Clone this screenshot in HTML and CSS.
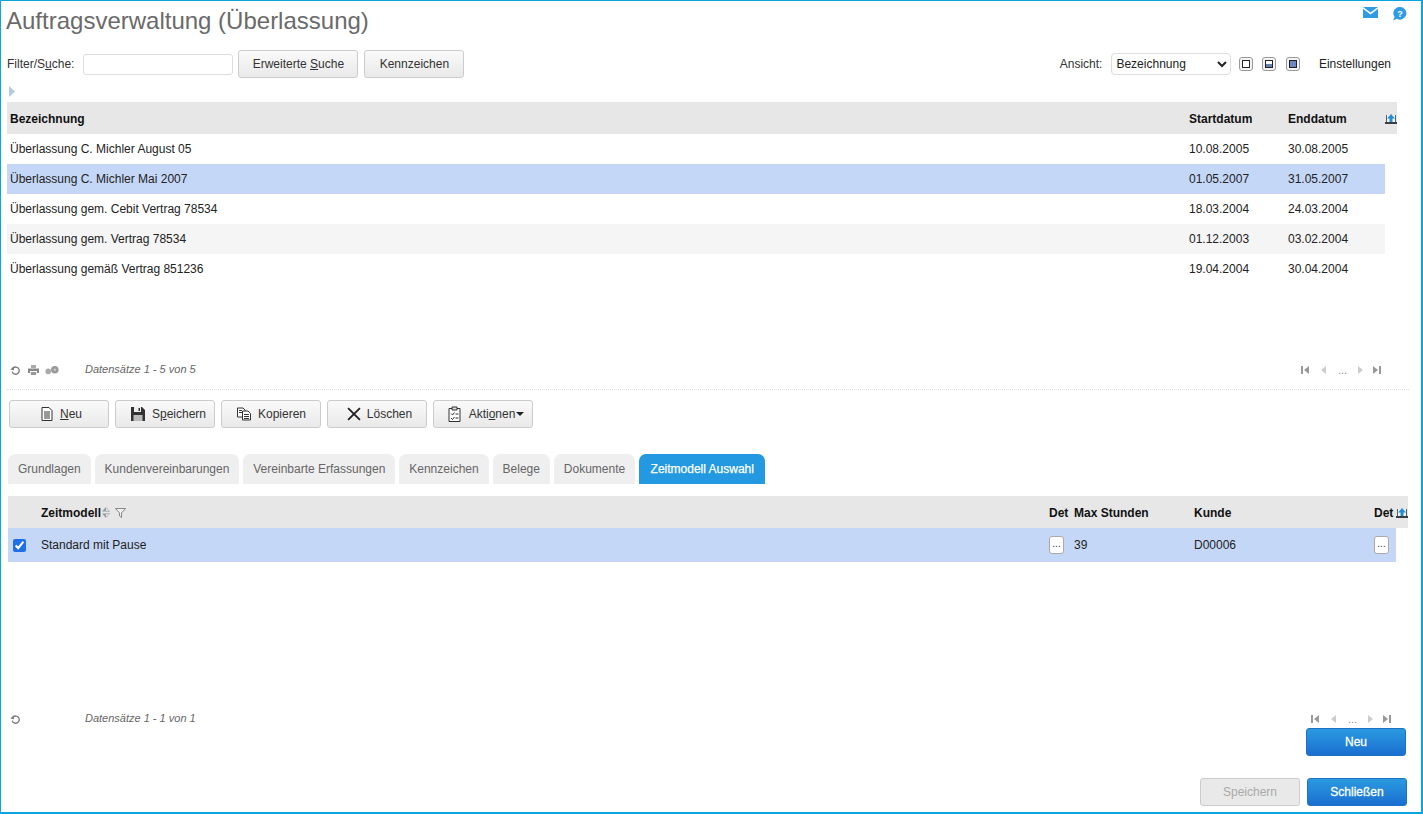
FILE: index.html
```html
<!DOCTYPE html>
<html lang="de">
<head>
<meta charset="utf-8">
<title>Auftragsverwaltung (Überlassung)</title>
<link rel="stylesheet" href="styles.css">
</head>
<body>
<svg class="defs" width="0" height="0" aria-hidden="true">
  <defs>
    <symbol id="export" viewBox="0 0 12 10">
      <rect x="1" y="1" width="10" height="7" fill="#f2f4f6"/>
      <path d="M1 1H2V8H10V1H11V9H1Z" fill="#5a6068"/>
      <rect x="0" y="8" width="12" height="2" fill="#3a3f46"/>
      <path d="M6 0 10 4.500H7.500V8H4.500V4.500H2Z" fill="#1e8fd8"/>
    </symbol>
    <symbol id="refresh" viewBox="0 0 11 11">
      <path d="M3 3.200A3.600 3.600 0 1 1 2.200 6.600" fill="none" stroke="#777" stroke-width="1.300"/>
      <path d="M0.400 4.600 4 5.200 3.600 1.600Z" fill="#777"/>
    </symbol>
  </defs>
</svg>
<main class="app">
  <header class="title-row">
    <h1 class="title">Auftragsverwaltung (Überlassung)</h1>
    <div class="top-icons">
      <svg class="icon-mail" viewBox="0 0 15 11"><path d="M0 0H15L7.500 5.600Z" fill="#2f9be4"/><path d="M0 1.800 7.500 7.400 15 1.800V11H0Z" fill="#2f9be4"/></svg>
      <svg class="icon-help" viewBox="0 0 15 14"><path d="M8 0A6.300 6.300 0 1 1 5 11.800L1 13.600 2.600 10A6.300 6.300 0 0 1 8 0Z" fill="#2f9be4"/><text x="8" y="9.600" class="help-q">?</text></svg>
    </div>
  </header>

  <section class="toolbar">
    <label class="lbl">Filter/S<u>u</u>che:</label>
    <input class="search" type="text" aria-label="Filter">
    <button class="btn btn-search">Erweiterte <u>S</u>uche</button>
    <button class="btn btn-flag">Kennzeichen</button>
    <div class="view">
      <label class="lbl">Ansicht:</label>
      <select class="view-select"><option>Bezeichnung</option></select>
      <span class="layout-btn"><span class="layout-in"></span></span>
      <span class="layout-btn"><span class="layout-in half"></span></span>
      <span class="layout-btn"><span class="layout-in full"></span></span>
      <span class="settings">Einstellungen</span>
    </div>
  </section>

  <div class="expander"><svg width="6" height="11" viewBox="0 0 6 11"><path d="M0 0 6 5.500 0 11Z" fill="#b4cbdc"/></svg></div>

  <section class="table-a">
    <div class="a-row a-head">
      <span>Bezeichnung</span><span>Startdatum</span><span>Enddatum</span>
      <svg class="export"><use href="#export"/></svg>
    </div>
    <div class="a-row"><span>Überlassung C. Michler August 05</span><span>10.08.2005</span><span>30.08.2005</span></div>
    <div class="a-row sel"><span>Überlassung C. Michler Mai 2007</span><span>01.05.2007</span><span>31.05.2007</span></div>
    <div class="a-row"><span>Überlassung gem. Cebit Vertrag 78534</span><span>18.03.2004</span><span>24.03.2004</span></div>
    <div class="a-row alt"><span>Überlassung gem. Vertrag 78534</span><span>01.12.2003</span><span>03.02.2004</span></div>
    <div class="a-row"><span>Überlassung gemäß Vertrag 851236</span><span>19.04.2004</span><span>30.04.2004</span></div>
  </section>

  <footer class="list-foot foot-a">
    <svg class="ico-refresh"><use href="#refresh"/></svg>
    <svg class="ico-print" viewBox="0 0 11 10"><path d="M3 0H8V3H3Z" fill="#aaa"/><path d="M0 3.500H11V8H9V6H2V8H0Z" fill="#888"/><path d="M2.800 7H8.200V10H2.800Z" fill="#999"/></svg>
    <svg class="ico-gears" viewBox="0 0 14 9"><circle cx="3.200" cy="5.400" r="2.800" fill="#aaa"/><circle cx="9.800" cy="3.800" r="3.800" fill="#999"/><circle cx="9.800" cy="3.800" r="1.200" fill="#ccc"/></svg>
    <span class="records">Datensätze 1 - 5 von 5</span>
    <nav class="pager">
      <svg class="pg" viewBox="0 0 8 8"><path d="M0 0H2V8H0ZM8 0V8L3 4Z" fill="#999"/></svg>
      <svg class="pg pg-prev" viewBox="0 0 5 8"><path d="M5 0V8L0 4Z" fill="#ccc"/></svg>
      <span class="dots">...</span>
      <svg class="pg pg-next" viewBox="0 0 5 8"><path d="M0 0V8L5 4Z" fill="#ccc"/></svg>
      <svg class="pg pg-last" viewBox="0 0 8 8"><path d="M0 0V8L5 4ZM6 0H8V8H6Z" fill="#999"/></svg>
    </nav>
  </footer>

  <div class="sep"></div>

  <section class="actions">
    <button class="btn act act-new">
      <svg class="act-ico" viewBox="0 0 12 14"><path d="M1 .500H8L11 3.500V13.500H1Z" fill="#fff" stroke="#333"/><path d="M3 5H9M3 7H9M3 9H9M3 11H9" stroke="#333"/></svg>
      <span><u>N</u>eu</span>
    </button>
    <button class="btn act act-save">
      <svg class="act-ico" viewBox="0 0 14 14"><path d="M0 0H11L14 3V14H0Z" fill="#333"/><path d="M3 0H10V5H3Z" fill="#eee"/><path d="M7.500 1H9V4H7.500Z" fill="#333"/><path d="M2.500 8H11.500V14H2.500Z" fill="#bbb"/></svg>
      <span>S<u>p</u>eichern</span>
    </button>
    <button class="btn act act-copy">
      <svg class="act-ico" viewBox="0 0 14 13"><path d="M.500.500H6L8 2.500V9.500H.500Z" fill="#fff" stroke="#333"/><path d="M5.500 3.500H11L13.500 6V12.500H5.500Z" fill="#fff" stroke="#333"/><path d="M2 3H5M2 5H5M7 7H12M7 9H12M7 11H12" stroke="#333"/></svg>
      <span>Kopieren</span>
    </button>
    <button class="btn act act-del">
      <svg class="act-ico" viewBox="0 0 13 13"><path d="M1 1 12 12M12 1 1 12" stroke="#222" stroke-width="1.700"/></svg>
      <span>Löschen</span>
    </button>
    <button class="btn act act-more">
      <svg class="act-ico" viewBox="0 0 14 16"><path d="M1.500 2.500H12.500V15.500H1.500Z" fill="#fff" stroke="#333"/><path d="M4.500 1H9.500V4H4.500Z" fill="#ddd" stroke="#333"/><path d="M3.500 7.500 5 9 7 6.500M3.500 12 5 13.500 7 11" fill="none" stroke="#333"/><path d="M8 8H11M8 12H11" stroke="#333"/></svg>
      <span>Akti<u>o</u>nen<i class="caret"></i></span>
    </button>
  </section>

  <nav class="tabs">
    <span class="tab">Grundlagen</span>
    <span class="tab">Kundenvereinbarungen</span>
    <span class="tab">Vereinbarte Erfassungen</span>
    <span class="tab">Kennzeichen</span>
    <span class="tab">Belege</span>
    <span class="tab">Dokumente</span>
    <span class="tab active">Zeitmodell Auswahl</span>
  </nav>

  <section class="table-b">
    <div class="b-row b-head">
      <span></span>
      <span class="zm">Zeitmodell
        <svg class="sort" viewBox="0 0 8 11"><path d="M4 0V4.500H0ZM4 11V6.500H0Z" fill="#999"/><path d="M4 .500 7.500 4.500H4M4 10.500 7.500 6.500H4" fill="none" stroke="#aaa" stroke-width=".8"/></svg>
        <svg class="filter" viewBox="0 0 11 10"><path d="M.500.500H10.500L6.500 5V9.500L4.500 8V5Z" fill="#fff" fill-opacity=".4" stroke="#888"/></svg>
      </span>
      <span>Det</span><span>Max Stunden</span><span>Kunde</span><span>Det</span>
      <svg class="export"><use href="#export"/></svg>
    </div>
    <div class="b-row b-body">
      <input class="check" type="checkbox" checked aria-label="Auswahl">
      <span>Standard mit Pause</span>
      <button class="dots-btn">...</button>
      <span>39</span>
      <span>D00006</span>
      <button class="dots-btn">...</button>
    </div>
  </section>

  <footer class="list-foot foot-b">
    <svg class="ico-refresh"><use href="#refresh"/></svg>
    <span class="records">Datensätze 1 - 1 von 1</span>
    <nav class="pager">
      <svg class="pg" viewBox="0 0 8 8"><path d="M0 0H2V8H0ZM8 0V8L3 4Z" fill="#999"/></svg>
      <svg class="pg pg-prev" viewBox="0 0 5 8"><path d="M5 0V8L0 4Z" fill="#ccc"/></svg>
      <span class="dots">...</span>
      <svg class="pg pg-next" viewBox="0 0 5 8"><path d="M0 0V8L5 4Z" fill="#ccc"/></svg>
      <svg class="pg pg-last" viewBox="0 0 8 8"><path d="M0 0V8L5 4ZM6 0H8V8H6Z" fill="#999"/></svg>
    </nav>
  </footer>

  <div class="new-row"><button class="btn primary">Neu</button></div>

  <div class="bottom-row">
    <button class="btn disabled">Speichern</button>
    <button class="btn primary">Schließen</button>
  </div>
</main>
</body>
</html>
```
FILE: styles.css
```css
* { box-sizing: border-box; }
html, body { margin: 0; padding: 0; background: #fff; }
body { font: 12px "Liberation Sans", Arial, sans-serif; color: #222; overflow: hidden; }
.defs { position: absolute; }
button { font: inherit; }

.app {
  width: 1423px;
  height: 814px;
  border: 1px solid #0aa5e0;
  border-width: 1px 2px 2px 1px;
  display: flex;
  flex-direction: column;
  overflow: hidden;
}

.title-row { display: flex; height: 49px; padding-left: 5px; }
.title { margin: 7px 0 0; font-size: 24px; font-weight: 400; line-height: 26px; color: #6a6a6a; }
.top-icons { margin-left: auto; display: flex; gap: 14px; padding: 6px 14px 0 0; align-items: flex-start; }
.icon-mail { width: 15px; height: 11px; }
.icon-help { width: 15px; height: 14px; }
.help-q { font: bold 9px "Liberation Sans", sans-serif; fill: #fff; text-anchor: middle; }

.btn {
  height: 28px;
  border: 1px solid #ccc;
  border-radius: 3px;
  background: linear-gradient(#fafafa, #e9e9e9);
  color: #333;
  padding: 0;
  cursor: default;
}
.toolbar { display: flex; align-items: center; height: 28px; padding-left: 6px; }
.lbl { color: #333; }
.search { width: 150px; height: 21px; margin-left: 9px; border: 1px solid #ddd; border-radius: 3px; background: #fff; }
.btn-search { width: 120px; margin-left: 5px; }
.btn-flag { width: 100px; margin-left: 6px; }
.view { margin-left: auto; display: flex; align-items: center; padding-right: 30px; }
.view-select {
  width: 120px; height: 22px; margin-left: 9px; padding: 0;
  border: 1px solid #ddd; border-radius: 4px; background: #fff;
  font: 12px "Liberation Sans", sans-serif; color: #222;
}
.layout-btn {
  width: 14px; height: 14px; margin-left: 8px; padding: 2px;
  border: 1px solid #999; border-radius: 3px; background: #f4f4f4; display: flex;
}
.layout-btn + .layout-btn { margin-left: 9px; }
.layout-btn + .layout-btn + .layout-btn { margin-left: 10px; }
.layout-in { flex: 1; border: 1px solid #222; background: #fff; }
.layout-in.half { background: linear-gradient(#fff 50%, #6a7fae 50%); }
.layout-in.full { background: #6a86c4; }
.settings { margin-left: 18.500px; }

.expander { height: 24px; padding: 8px 0 0 8px; display: flex; align-items: flex-start; }

.table-a { margin-left: 6px; width: 1390px; }
.a-row {
  display: grid;
  align-items: center;
  height: 30px;
  width: 1378px;
  padding-left: 3px;
  grid-template-columns: 1179px 99px 97px;
}
.a-row.a-head { width: 1390px; height: 32px; padding-top: 1px; background: #e7e7e7; font-weight: 700; color: #111; grid-template-columns: 1179px 99px 97px 11px; }
.a-row.sel { background: #c5d7f7; }
.a-row.alt { background: #f5f5f5; }
.export { width: 12px; height: 10px; display: block; }

.list-foot { display: flex; align-items: center; height: 16px; font-size: 11px; }
.foot-a { margin-top: 78px; padding-left: 9px; }
.foot-b { margin-top: 149px; padding-left: 9px; }
.ico-refresh { width: 11px; height: 11px; }
.ico-print { width: 11px; height: 10px; margin-left: 7px; }
.ico-gears { width: 14px; height: 9px; margin-left: 6px; }
.records { font-style: italic; color: #666; margin-left: 26px; margin-bottom: 2px; }
.foot-b .records { margin-left: 64px; }
.pager { margin-left: auto; display: flex; align-items: center; margin-right: 40px; color: #888; }
.foot-b .pager { margin-right: 30px; }
.pg { width: 8px; height: 8px; }
.pg-prev, .pg-next { width: 5px; }
.pg-prev { margin-left: 12px; }
.dots { width: 8px; margin: 0 12px; text-align: center; line-height: 10px; }
.pg-last { margin-left: 10px; }

.sep { margin: 11px 12px 0 6px; border-top: 1px dotted #ddd; height: 0; }

.actions { display: flex; gap: 6px; padding: 10px 0 0 8px; }
.act { width: 100px; padding-left: 5px; display: flex; align-items: center; justify-content: center; gap: 7px; }
.act-new { gap: 6px; padding-left: 4px; }
.act-save { padding-left: 7px; }
.act-copy { padding-left: 1px; }
.act-del { gap: 6px; }
.act-ico { width: 14px; height: 14px; flex: none; }
.act-more .act-ico { width: 15px; height: 16px; }
.caret { display: inline-block; margin-left: 1px; vertical-align: 2px; border: 4px solid transparent; border-top-color: #222; border-bottom-width: 0; }

.tabs { display: flex; gap: 3.900px; padding: 26px 0 0 7px; }
.tab {
  height: 30px; padding: 0 10px; display: flex; align-items: center;
  background: #efefef; color: #666; border-radius: 7px 7px 0 0;
}
.tab.active { padding: 0 11.500px; background: #2299e0; color: #fff; -webkit-text-stroke: .25px #fff; }

.table-b { margin: 12px 0 0 7px; }
.b-row {
  display: grid;
  grid-template-columns: 33px 1008px 25px 120px 180px 22px;
  align-items: center;
}
.b-head { width: 1400px; height: 32px; padding-top: 1px; background: #e7e7e7; font-weight: 700; color: #111; grid-template-columns: 33px 1008px 25px 120px 180px 22px 12px; }
.b-body { width: 1388px; height: 34px; background: #c5d7f7; }
.zm { display: flex; align-items: center; }
.sort { width: 8px; height: 11px; margin-left: 1px; }
.filter { width: 11px; height: 10px; margin-left: 5px; }
.check { width: 13px; height: 13px; margin: 0 0 0 5px; accent-color: #1f6fe8; }
.dots-btn {
  width: 15px; height: 18px; padding: 0 0 3px; border: 1px solid #aaa; border-radius: 3px;
  background: #fff; font-size: 10px; color: #333; line-height: 10px;
}

.new-row { display: flex; justify-content: flex-end; padding: 1px 15px 0 0; }
.bottom-row { display: flex; justify-content: flex-end; gap: 7px; padding: 22px 14px 0 0; }
.new-row .btn, .bottom-row .btn { width: 100px; }
.primary {
  border: 1px solid #1d72c8;
  background: linear-gradient(#2a9ae0, #1a6fd0);
  color: #fff; -webkit-text-stroke: .3px #fff;
}
.disabled { background: #e9e9e9; border-color: #ccc; color: #aaa; }
```
